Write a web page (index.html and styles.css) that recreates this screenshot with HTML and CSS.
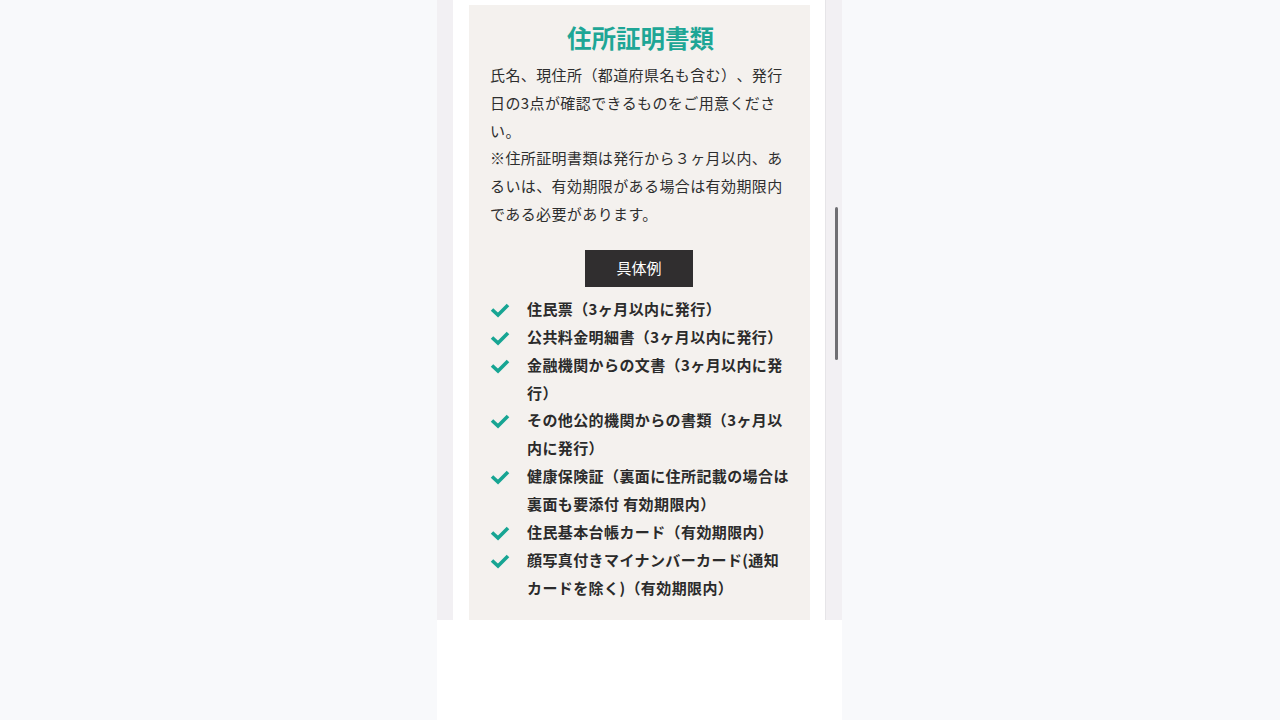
FILE: index.html
```html
<!DOCTYPE html>
<html>
<head>
	<title>住所証明書類</title>
	<meta charset="utf-8">
	<link rel="stylesheet" href="styles.css">
</head>
<body>
	<div class="phone">
		<div class="screen">
			<div class="page">
				<div class="doc-card">
					<h2 class="doc-title">住所証明書類</h2>
					<p class="doc-text">氏名、現住所（都道府県名も含む）、発行日の3点が確認できるものをご用意ください。<br>※住所証明書類は発行から３ヶ月以内、あるいは、有効期限がある場合は有効期限内である必要があります。</p>
					<div class="doc-btn-wrap">
						<span class="doc-btn">具体例</span>
					</div>
					<ul class="doc-list">
						<li><svg class="chk" viewBox="0 0 20 16"><polyline points="2,7.5 8,13 18,3"/></svg><span>住民票（3ヶ月以内に発行）</span></li>
						<li><svg class="chk" viewBox="0 0 20 16"><polyline points="2,7.5 8,13 18,3"/></svg><span>公共料金明細書（3ヶ月以内に発行）</span></li>
						<li><svg class="chk" viewBox="0 0 20 16"><polyline points="2,7.5 8,13 18,3"/></svg><span>金融機関からの文書（3ヶ月以内に発行）</span></li>
						<li><svg class="chk" viewBox="0 0 20 16"><polyline points="2,7.5 8,13 18,3"/></svg><span>その他公的機関からの書類（3ヶ月以内に発行）</span></li>
						<li><svg class="chk" viewBox="0 0 20 16"><polyline points="2,7.5 8,13 18,3"/></svg><span>健康保険証（裏面に住所記載の場合は裏面も要添付 有効期限内）</span></li>
						<li><svg class="chk" viewBox="0 0 20 16"><polyline points="2,7.5 8,13 18,3"/></svg><span>住民基本台帳カード（有効期限内）</span></li>
						<li><svg class="chk" viewBox="0 0 20 16"><polyline points="2,7.5 8,13 18,3"/></svg><span>顔写真付きマイナンバーカード(通知カードを除く)（有効期限内）</span></li>
					</ul>
				</div>
			</div>
			<div class="scroll-thumb"></div>
		</div>
		<div class="bottom"></div>
	</div>
</body>
</html>
```
FILE: styles.css
```css
body {
	margin: 0;
	background-color: #f8f9fb;
	font-family: "Noto Sans CJK JP", "Noto Sans", sans-serif;
	color: #333;
	text-spacing-trim: space-all;
}
.phone {
	width: 405px;
	height: 720px;
	margin-left: calc(50% - 203px);
	background-color: #fff;
}
.screen {
	position: relative;
	height: 620px;
	overflow: hidden;
	background-color: #f2f0f3;
	padding: 0 16px;
}
.page {
	height: 100%;
	background-color: #fff;
	border-right: solid 1px #e6e5e8;
	padding: 5px 15px 0 16px;
}
.doc-card {
	background-color: #f4f1ee;
	padding: 16px 19px 30px 21px;
	height: 100%;
	box-sizing: border-box;
}
.doc-title {
	margin: 0;
	text-align: center;
	color: #1ea696;
	font-size: 24.5px;
	line-height: 34px;
	font-weight: bold;
}
.doc-text {
	margin: 6px 0 0;
	font-size: 15px;
	letter-spacing: 0.4px;
	line-height: 27.8px;
	color: #2e2e2e;
}
.doc-btn-wrap {
	text-align: center;
	margin: 22px 3px 0 0;
}
.doc-btn {
	display: inline-block;
	width: 108px;
	height: 37px;
	line-height: 36px;
	background-color: #302e2f;
	color: #fff;
	font-size: 15px;
}
.doc-list {
	list-style: none;
	margin: 8px 0 0;
	padding: 0;
}
.doc-list li {
	display: flex;
	align-items: flex-start;
	font-size: 15px;
	letter-spacing: 0.4px;
	line-height: 27.9px;
	font-weight: bold;
	color: #2b2b2b;
}
.chk {
	flex: none;
	width: 20px;
	height: 16px;
	margin-top: 7px;
	margin-right: 17px;
}
.chk polyline {
	fill: none;
	stroke: #17a593;
	stroke-width: 3.6;
}
.scroll-thumb {
	position: absolute;
	left: 398px;
	top: 207px;
	width: 3px;
	height: 153px;
	border-radius: 2px;
	background-color: #6f6f73;
}
.bottom {
	height: 100px;
}
```
